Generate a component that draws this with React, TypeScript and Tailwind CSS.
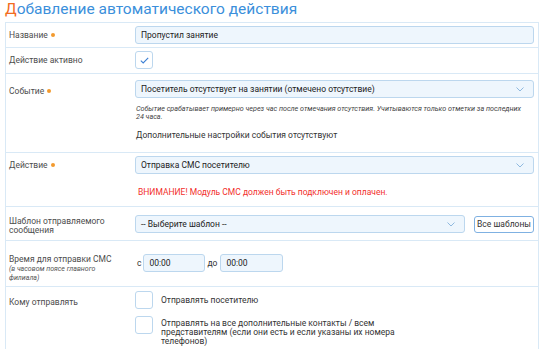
import React from "react";

const Dot = () => <span className="mb-[1px] ml-[3px] inline-block h-[4px] w-[4px] rounded-full bg-[#f39a2e] align-middle" />;

const Chevron = () => (
  <svg width="8" height="5" viewBox="0 0 8 5" className="shrink-0">
    <polyline points="0.5,0.5 4,4 7.5,0.5" fill="none" stroke="#8fb9df" strokeWidth="1" />
  </svg>
);

const Select = ({ text, className = "" }: { text: string; className?: string }) => (
  <div
    className={`flex h-[18px] items-center justify-between rounded-[3px] border border-[#bcd7ee] bg-[#eef6fd] pl-[5px] pr-[9px] text-[8.5px] text-[#222] ${className}`}
  >
    <span>{text}</span>
    <Chevron />
  </div>
);

const Check = ({ checked = false }: { checked?: boolean }) => (
  <div className="flex h-[18px] w-[18px] shrink-0 items-center justify-center rounded-[3px] border border-[#bcd7ee] bg-white">
    {checked && (
      <svg width="9" height="7" viewBox="0 0 9 7">
        <polyline points="0.8,3.6 3.2,6 8.2,0.8" fill="none" stroke="#3b7fd4" strokeWidth="1.1" />
      </svg>
    )}
  </div>
);

export default function App() {
  return (
    <div className="h-[349px] w-[550px] overflow-hidden bg-white font-['Roboto',sans-serif] text-[#4d4d4d]">
      <h1 className="h-[22px] pl-[5px] text-[15.5px] leading-[18px] text-[#3b8fdb]">
        <span className="text-[#f26b21]">Д</span>обавление автоматического действия
      </h1>
      <div className="ml-[5px] w-[534px] border border-[#d9e9f6]">
        {/* Row 1 */}
        <div className="flex border-b border-[#d9e9f6]">
          <div className="w-[129px] shrink-0 pl-[3px] pt-[6px] text-[8.5px] leading-[12px]">
            Название<Dot />
          </div>
          <div className="flex-1 pb-[3px] pr-[4px] pt-[3px]">
            <div className="flex h-[18px] items-center rounded-[3px] border border-[#bcd7ee] bg-[#eef6fd] pl-[5px] text-[8.5px] text-[#222]">
              Пропустил занятие
            </div>
          </div>
        </div>
        {/* Row 2 */}
        <div className="flex border-b border-[#d9e9f6]">
          <div className="w-[129px] shrink-0 pl-[3px] pt-[6px] text-[8.5px] leading-[12px]">Действие активно</div>
          <div className="flex-1 pb-[4px] pr-[4px] pt-[3px]">
            <Check checked />
          </div>
        </div>
        {/* Row 3 */}
        <div className="flex border-b border-[#d9e9f6]">
          <div className="w-[129px] shrink-0 pl-[3px] pt-[11px] text-[8.5px] leading-[12px]">
            Событие<Dot />
          </div>
          <div className="flex-1 pb-[11px] pr-[4px] pt-[6px]">
            <Select text="Посетитель отсутствует на занятии (отмечено отсутствие)" />
            <div className="mt-[7px] whitespace-nowrap pl-[1px] text-[7.2px] italic leading-[8px] text-[#444]">
              Событие срабатывает примерно через час после отмечания отсутствия. Учитываются только отметки за последних
              <br />
              24 часа.
            </div>
            <div className="mt-[8px] pl-[1px] text-[8.5px] leading-[12px] text-[#333]">
              Дополнительные настройки события отсутствуют
            </div>
          </div>
        </div>
        {/* Row 4 */}
        <div className="flex border-b border-[#d9e9f6]">
          <div className="w-[129px] shrink-0 pl-[3px] pt-[6px] text-[8.5px] leading-[12px]">
            Действие<Dot />
          </div>
          <div className="flex-1 pb-[8px] pr-[4px] pt-[3px]">
            <Select text="Отправка СМС посетителю" />
            <div className="mt-[12px] pl-[3px] text-[8.5px] leading-[12px] text-[#f2302c]">
              ВНИМАНИЕ! Модуль СМС должен быть подключен и оплачен.
            </div>
          </div>
        </div>
        {/* Row 5 */}
        <div className="flex border-b border-[#d9e9f6]">
          <div className="w-[129px] shrink-0 pl-[3px] pr-[20px] pt-[10px] text-[8.5px] leading-[9px]">
            Шаблон отправляемого сообщения
          </div>
          <div className="flex flex-1 items-center gap-[9px] pb-[7px] pr-[4px] pt-[8px]">
            <Select text="-- Выберите шаблон --" className="flex-1" />
            <button className="h-[17px] w-[60px] shrink-0 rounded-[3px] border border-[#7fb1e2] bg-white text-[8.5px] leading-[15px] text-[#333]">
              Все шаблоны
            </button>
          </div>
        </div>
        {/* Row 6 */}
        <div className="flex border-b border-[#d9e9f6]">
          <div className="w-[129px] shrink-0 pb-[3px] pl-[3px] pt-[12px]">
            <div className="text-[8.5px] leading-[12px]">Время для отправки СМС</div>
            <div className="pr-[20px] text-[7px] italic leading-[9px] text-[#555]">
              (в часовом поясе главного филиала)
            </div>
          </div>
          <div className="flex flex-1 items-start pr-[4px] pt-[13px]">
            <div className="flex items-center text-[8.5px] text-[#333]">
              <span className="ml-[2px] mr-[2px]">с</span>
              <div className="flex h-[18px] w-[62px] items-center rounded-[3px] border border-[#bcd7ee] bg-[#eef6fd] pl-[5px] text-[#222]">
                00:00
              </div>
              <span className="ml-[2px] mr-[3px]">до</span>
              <div className="flex h-[18px] w-[63px] items-center rounded-[3px] border border-[#bcd7ee] bg-[#eef6fd] pl-[5px] text-[#222]">
                00:00
              </div>
            </div>
          </div>
        </div>
        {/* Row 7 */}
        <div className="flex">
          <div className="w-[129px] shrink-0 pl-[3px] pt-[9px] text-[8.5px] leading-[12px]">Кому отправлять</div>
          <div className="flex-1 pb-[20px] pr-[4px] pt-[4px] text-[8.5px] text-[#333]">
            <div className="flex items-center gap-[8px]">
              <Check />
              <span className="leading-[12px]">Отправлять посетителю</span>
            </div>
            <div className="mt-[7px] flex items-start gap-[8px]">
              <Check />
              <span className="whitespace-nowrap pt-[3px] leading-[9px]">
                Отправлять на все дополнительные контакты / всем
                <br />
                представителям (если они есть и если указаны их номера
                <br />
                телефонов)
              </span>
            </div>
          </div>
        </div>
      </div>
    </div>
  );
}
